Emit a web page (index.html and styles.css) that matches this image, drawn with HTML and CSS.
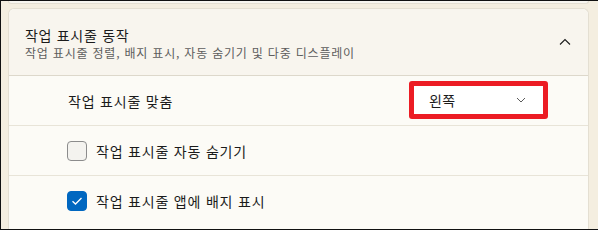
FILE: index.html
```html
<!DOCTYPE html>
<html lang="ko">
<head>
<meta charset="utf-8">
<link rel="stylesheet" href="styles.css">
</head>
<body>
<div class="frame">
  <div class="prev-card"></div>
  <div class="card">
    <div class="card-header">
      <div class="header-text">
        <div class="title">작업 표시줄 동작</div>
        <div class="subtitle">작업 표시줄 정렬, 배지 표시, 자동 숨기기 및 다중 디스플레이</div>
      </div>
      <svg class="chev-up" width="12" height="8" viewBox="0 0 12 8"><path d="M1 6.5 L6 1.5 L11 6.5" fill="none" stroke="#1b1b1b" stroke-width="1.1"/></svg>
    </div>
    <div class="row">
      <span class="label">작업 표시줄 맞춤</span>
      <div class="select">
        <span class="select-text">왼쪽</span>
        <svg class="chev-down" width="10" height="6" viewBox="0 0 10 6"><path d="M1 1 L5 5 L9 1" fill="none" stroke="#5a5a5a" stroke-width="1"/></svg>
      </div>
    </div>
    <div class="row check-row">
      <span class="checkbox"></span>
      <span class="label">작업 표시줄 자동 숨기기</span>
    </div>
    <div class="row check-row">
      <span class="checkbox checked"><svg width="12" height="10" viewBox="0 0 12 10"><path d="M1.5 5.2 L4.5 8 L10.5 2" fill="none" stroke="#ffffff" stroke-width="1.3"/></svg></span>
      <span class="label">작업 표시줄 앱에 배지 표시</span>
    </div>
  </div>
</div>
</body>
</html>
```

FILE: styles.css
```css
html, body {
  margin: 0;
  padding: 0;
}
body {
  font-family: "Noto Sans CJK KR", "Noto Sans", sans-serif;
  background: #f4eee0;
}
.frame {
  width: 598px;
  height: 230px;
  box-sizing: border-box;
  border-top: 1px solid #111;
  border-left: 1px solid #111;
  border-bottom: 1px solid #111;
  background: #f4eee0;
  overflow: hidden;
  display: flex;
  flex-direction: column;
}
.prev-card {
  height: 2px;
  margin: 0 9px 0 7px;
  border: 1px solid #e4dfd2;
  border-top: none;
  border-radius: 0 0 5px 5px;
  background: #f8f6f0;
  flex: none;
}
.card {
  margin: 4px 9px 0 7px;
  border: 1px solid #e4dfd2;
  border-bottom: none;
  border-radius: 6px 6px 0 0;
  background: #fcfbf6;
  flex: 1;
  display: flex;
  flex-direction: column;
}
.card-header {
  height: 67px;
  flex: none;
  box-sizing: border-box;
  border-bottom: 1px solid #ddd8cb;
  background: #f8f5ee;
  border-radius: 6px 6px 0 0;
  display: flex;
  align-items: center;
  padding: 0 17px 0 16px;
}
.header-text {
  flex: 1;
  display: flex;
  flex-direction: column;
  gap: 1px;
  padding-top: 2px;
}
.title {
  font-size: 14px;
  line-height: 18px;
  letter-spacing: 0.7px;
  color: #1b1b1b;
}
.subtitle {
  font-size: 12px;
  line-height: 16px;
  letter-spacing: 0.8px;
  color: #5d5d5d;
}
.chev-up {
  flex: none;
}
.row {
  height: 50px;
  flex: none;
  box-sizing: border-box;
  border-bottom: 1px solid #e8e4d8;
  display: flex;
  align-items: center;
  padding: 0 40px 0 59px;
}
.row:last-child {
  border-bottom: none;
}
.label {
  font-size: 14px;
  letter-spacing: 0.8px;
  color: #1b1b1b;
  flex: 1;
}
.select {
  width: 139px;
  height: 38px;
  box-sizing: border-box;
  border: 5px solid #ec1c24;
  border-radius: 3px;
  background: #ffffff;
  display: flex;
  align-items: center;
  padding: 0 17px 0 15px;
  margin-top: -2px;
}
.select-text {
  flex: 1;
  font-size: 14px;
  letter-spacing: 0.3px;
  color: #1b1b1b;
}
.check-row {
  gap: 9px;
  padding-left: 58px;
}
.checkbox {
  width: 20px;
  height: 20px;
  box-sizing: border-box;
  border: 1px solid #8c8c8c;
  border-radius: 4px;
  background: #f4f3ef;
  flex: none;
  display: flex;
  align-items: center;
  justify-content: center;
}
.checkbox.checked {
  background: #0067c0;
  border-color: #0067c0;
}
```
